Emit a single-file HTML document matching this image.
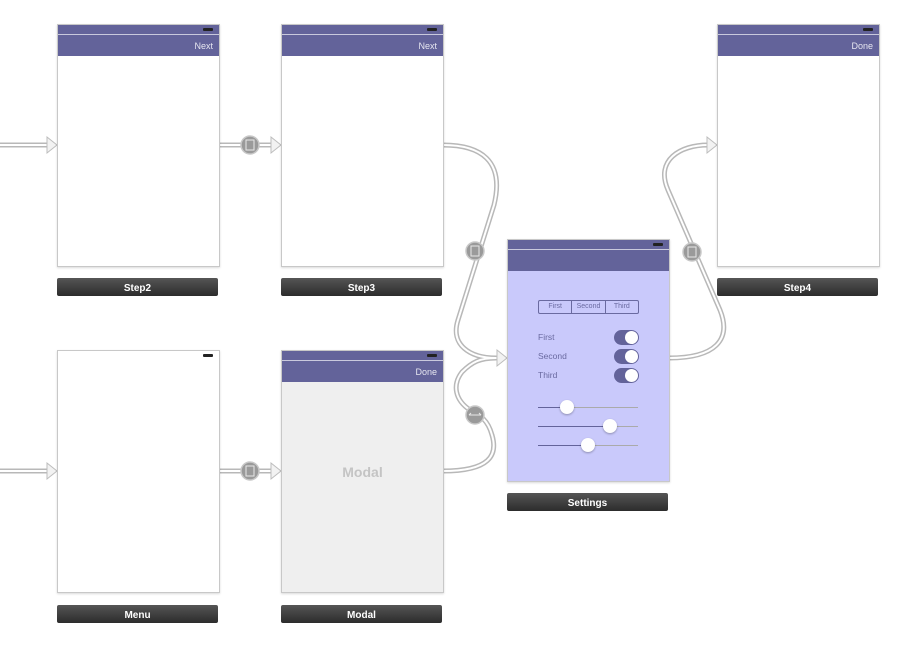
<!DOCTYPE html>
<html><head><style>
body{margin:0;width:907px;height:647px;background:#fff;position:relative;overflow:hidden;font-family:"Liberation Sans",sans-serif}
.sc{position:absolute;width:161px;height:241px;border:1px solid #c8c8c8;background:#fff;box-shadow:0 1px 2px rgba(0,0,0,.15)}
.st{height:9px;background:#63639a;border-bottom:1px solid #c9c9dd;position:relative}
.sb{height:9px;position:relative}
.bat{position:absolute;right:6px;top:3px;width:10px;height:3px;background:#222;border-radius:1px}
.nav{height:21px;background:#63639a;color:#e6e6f0;font-size:9px;text-align:right;padding-right:6px;line-height:23px}
.lb{position:absolute;width:161px;height:18px;background:linear-gradient(#555,#2c2c2c);color:#fff;font-weight:bold;font-size:10px;text-align:center;line-height:21px;border-radius:2px}
svg{position:absolute;left:0;top:0}
.lbl{position:absolute;font-size:8.5px;color:#6a6aa0}
.tg{position:absolute;left:106px;width:25px;height:15px;border-radius:8px;background:#63639a}
.tg:after{content:"";position:absolute;right:1px;top:1px;width:13px;height:13px;border-radius:50%;background:#fff}
.sl{position:absolute;left:30px;width:100px;height:1px;background:#aaa}
.sl i{position:absolute;left:0;top:0;height:1px;background:#63639a}
.sl b{position:absolute;top:-7px;width:14px;height:14px;border-radius:50%;background:#fff;box-shadow:0 1px 2px rgba(0,0,0,.3)}
</style></head><body>
<svg width="907" height="647">
<g fill="none" stroke-linecap="round">
<g stroke="#b8b8b8" stroke-width="5">
<path d="M0 145H48M219 145H272M443 145C480 145 505 160 494 205L458 320C450 345 470 358 496 358M669 358C715 358 732 340 720 310L668 190C655 160 680 145 708 145M0 471H48M219 471H272M443 471C490 471 498 455 492 435C488 420 480 415 470 410C455 400 452 385 462 372C472 362 480 358 496 358"/>
</g>
<g stroke="#fff" stroke-width="2">
<path d="M0 145H48M219 145H272M443 145C480 145 505 160 494 205L458 320C450 345 470 358 496 358M669 358C715 358 732 340 720 310L668 190C655 160 680 145 708 145M0 471H48M219 471H272M443 471C490 471 498 455 492 435C488 420 480 415 470 410C455 400 452 385 462 372C472 362 480 358 496 358"/>
</g>
</g>
<g fill="#f2f2f2" stroke="#bdbdbd">
<path d="M47 137L57 145L47 153Z"/><path d="M271 137L281 145L271 153Z"/><path d="M707 137L717 145L707 153Z"/>
<path d="M47 463L57 471L47 479Z"/><path d="M271 463L281 471L271 479Z"/><path d="M497 350L507 358L497 366Z"/>
</g>
<g fill="#9a9a9a" stroke="#c8c8c8" stroke-width="1.5">
<circle cx="250" cy="145" r="9"/><circle cx="475" cy="251" r="9"/><circle cx="692" cy="252" r="9"/><circle cx="250" cy="471" r="9"/><circle cx="475" cy="415" r="9"/>
</g>
<g fill="none" stroke="#e8e8e8" stroke-width="1">
<rect x="246" y="140" width="8" height="10"/><rect x="471" y="246" width="8" height="10"/><rect x="688" y="247" width="8" height="10"/><rect x="246" y="466" width="8" height="10"/>
<path d="M469 415H481M469 415l2-2M481 415l-2-2"/>
</g>
</svg>

<div class="sc" style="left:57px;top:24px"><div class="st"><span class="bat"></span></div><div class="nav">Next</div></div>
<div class="lb" style="left:57px;top:278px">Step2</div>
<div class="sc" style="left:281px;top:24px"><div class="st"><span class="bat"></span></div><div class="nav">Next</div></div>
<div class="lb" style="left:281px;top:278px">Step3</div>
<div class="sc" style="left:717px;top:24px"><div class="st"><span class="bat"></span></div><div class="nav">Done</div></div>
<div class="lb" style="left:717px;top:278px">Step4</div>

<div class="sc" style="left:507px;top:239px;background:#c9c9fb">
<div class="st"><span class="bat"></span></div><div class="nav"></div>
<div style="position:absolute;left:30px;top:60px;width:99px;height:12px;border:1px solid #6a6aa0;border-radius:2px;display:flex;font-size:7px;color:#6a6aa0;line-height:12px;text-align:center">
<span style="flex:1;border-right:1px solid #6a6aa0">First</span><span style="flex:1;border-right:1px solid #6a6aa0">Second</span><span style="flex:1">Third</span></div>
<div class="lbl" style="left:30px;top:92px">First</div><div class="tg" style="top:90px"></div>
<div class="lbl" style="left:30px;top:111px">Second</div><div class="tg" style="top:109px"></div>
<div class="lbl" style="left:30px;top:130px">Third</div><div class="tg" style="top:128px"></div>
<div class="sl" style="top:167px"><i style="width:29px"></i><b style="left:22px"></b></div>
<div class="sl" style="top:186px"><i style="width:72px"></i><b style="left:65px"></b></div>
<div class="sl" style="top:205px"><i style="width:50px"></i><b style="left:43px"></b></div>
</div>
<div class="lb" style="left:507px;top:493px">Settings</div>

<div class="sc" style="left:57px;top:350px"><div class="sb"><span class="bat"></span></div></div>
<div class="lb" style="left:57px;top:605px">Menu</div>
<div class="sc" style="left:281px;top:350px;background:#efefef"><div class="st"><span class="bat"></span></div><div class="nav">Done</div>
<div style="position:absolute;left:0;right:0;top:113px;text-align:center;font-size:14px;font-weight:bold;color:#c4c4c4">Modal</div></div>
<div class="lb" style="left:281px;top:605px">Modal</div>
</body></html>
